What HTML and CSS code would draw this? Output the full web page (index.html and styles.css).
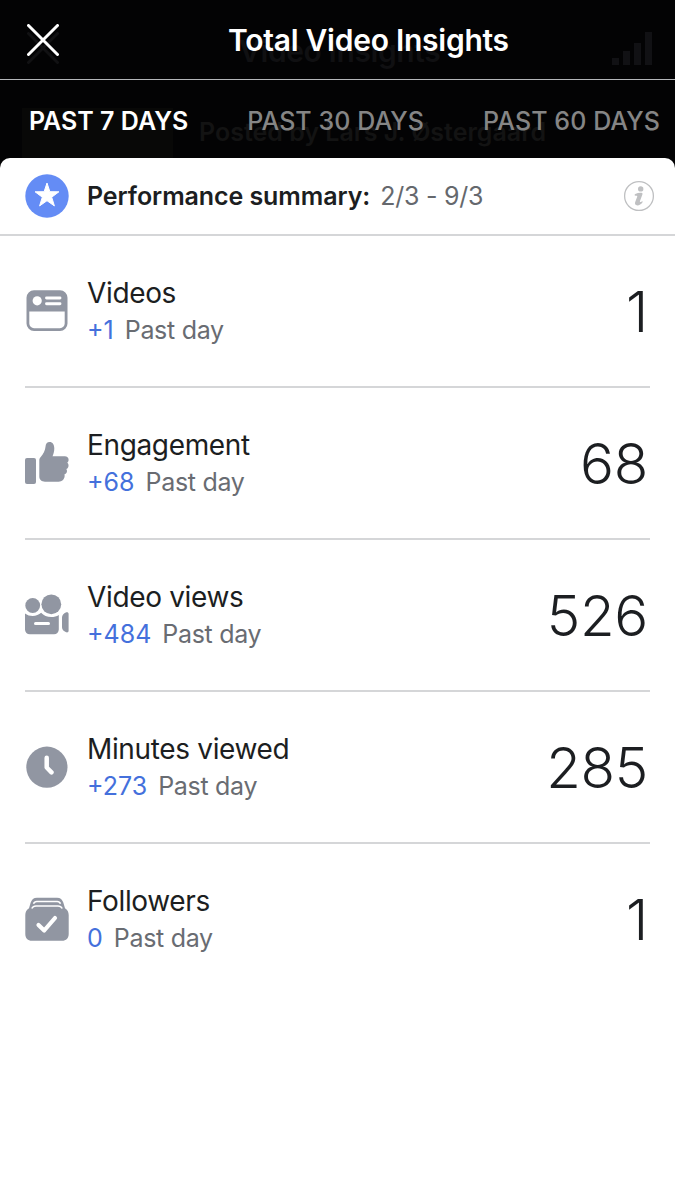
FILE: index.html
```
<!DOCTYPE html>
<html lang="en">
<head>
<meta charset="utf-8">
<title>Total Video Insights</title>
<link rel="stylesheet" href="styles.css">
</head>
<body>
<div class="screen">
  <div class="underlay" aria-hidden="true">
    <svg class="ghost-close" viewBox="0 0 32 32"><path d="M1.5 1.5L30.5 30.5M30.5 1.5L1.5 30.5"/></svg>
    <div class="ghost-title">Video Insights</div>
    <svg class="ghost-bars" viewBox="0 0 40 33"><path d="M0 26h7v7H0zM11 19h7v14h-7zM22 11h7v22h-7zM33 0h7v33h-7z"/></svg>
    <div class="ghost-thumb"></div>
    <div class="ghost-post">Posted by Lars J. Østergaard</div>
  </div>
  <header class="topbar">
    <svg class="close" viewBox="0 0 32 32"><path d="M1.5 1.5L30.5 30.5M30.5 1.5L1.5 30.5"/></svg>
    <h1 class="title">Total Video Insights</h1>
  </header>
  <nav class="tabs">
    <span class="tab active">PAST 7 DAYS</span>
    <span class="tab">PAST 30 DAYS</span>
    <span class="tab">PAST 60 DAYS</span>
  </nav>
  <main class="card">
    <div class="summary">
      <svg class="icon" viewBox="0 0 44 44"><circle cx="22" cy="22" r="21.7" fill="#648cf5"/><path fill="#fff" stroke="#fff" stroke-width="1" stroke-linejoin="round" d="M22 9l2.900 8.700 9 .1-7.200 5.400 2.700 8.700L22 26.700l-7.400 5.200 2.700-8.700-7.200-5.400 9-.1z"/></svg>
      <span class="summary-label">Performance summary:</span>
      <span class="summary-range">2/3 - 9/3</span>
      <svg class="info" viewBox="0 0 32 32"><circle cx="16" cy="16" r="14.400" fill="none" stroke="#bfc0c2" stroke-width="1.300"/><circle cx="17.700" cy="8.900" r="2.700" fill="#bfc0c2"/><path fill="#bfc0c2" d="M12.300 14c2-1 4.200-1.400 6.200-1.200.9.100 1.200.8.900 1.700l-2.500 6.800c-.2.700.3.900 1 .6l.9-.5c.8-.3 1.100.5.600 1.100-1.300 1.700-3 2.900-5 2.900-2 0-2.900-1.300-2.200-3.300l2-5.300c.2-.7-.1-1-.7-1h-1c-1.100 0-1.200-1.300-.2-1.800z"/></svg>
    </div>
    <section class="metrics">
      <div class="metric">
        <svg class="icon" viewBox="0 0 44 44"><path fill="#9196a2" fill-rule="evenodd" d="M9 1.300h26a7.500 7.500 0 0 1 7.500 7.500v25.700A7.500 7.500 0 0 1 35 42H9a7.500 7.500 0 0 1-7.500-7.500V8.800A7.500 7.500 0 0 1 9 1.300zM4.300 22.500v12A4.700 4.700 0 0 0 9 39.200h26a4.700 4.700 0 0 0 4.700-4.700v-12z"/><circle cx="12.200" cy="11.800" r="4.600" fill="#fff"/><path stroke="#fff" stroke-width="2.900" stroke-linecap="round" d="M21.500 9h13.500M21.500 14.700h13.500"/></svg>
        <div class="text"><div class="name">Videos</div><div class="change"><b>+1</b> <span>Past day</span></div></div>
        <div class="value">1</div>
      </div>
      <div class="metric">
        <svg class="icon" viewBox="0 0 44 44"><rect x="0" y="17" width="11" height="26" rx="2" fill="#9196a2"/><path fill="#9196a2" d="M14.300 19.500c0-1.500.5-2.300 1.400-3.400 2.500-3.200 4.500-6.500 4.800-10.300C20.700 3 22 1 24.600 1c3 0 4.700 2.700 4.700 6.200 0 3.200-.7 5.500-1.800 8.100h12.200c2.400 0 3.900 1.500 3.900 3.500 0 1.300-.6 2.400-1.400 3 .9.700 1.500 1.700 1.300 3.100-.1 1.500-1.100 2.700-2.300 3.200.7.700.9 1.600.7 2.700-.3 1.400-1.300 2.300-2.500 2.700.4.800.4 1.800 0 2.900C38.300 39.300 36.400 40.800 32 40.800H20c-3.300 0-5.700-2-5.700-5.200z"/></svg>
        <div class="text"><div class="name">Engagement</div><div class="change"><b>+68</b> <span>Past day</span></div></div>
        <div class="value">68</div>
      </div>
      <div class="metric">
        <svg class="icon" viewBox="0 0 44 44"><g fill="#9196a2"><circle cx="7.700" cy="12.500" r="7.400"/><circle cx="26.300" cy="11.300" r="9.900"/><path d="M0 20.500c2.200 1.700 4.900 2.500 7.700 2.500 3.400 0 6.300-1.200 8.400-3.200 2.500 2.700 6 4.300 10.200 4.300 2.800 0 5.400-.8 7.500-2.200v14.600a4.800 4.800 0 0 1-4.800 4.800H4.800A4.800 4.800 0 0 1 0 36.500z"/><path d="M37 24.500c0-2 1.500-4 4.200-5.200 1.200-.5 2.400.2 2.400 1.500v17c0 1.300-1.200 2-2.400 1.500C38.500 38.200 37 36.200 37 34.200z"/></g><path stroke="#fff" stroke-width="3" stroke-linecap="round" d="M10.500 30.400h13"/></svg>
        <div class="text"><div class="name">Video views</div><div class="change"><b>+484</b> <span>Past day</span></div></div>
        <div class="value">526</div>
      </div>
      <div class="metric">
        <svg class="icon" viewBox="0 0 44 44"><circle cx="21.900" cy="22.200" r="20.600" fill="#9196a2"/><path fill="none" stroke="#fff" stroke-width="4.500" stroke-linecap="round" stroke-linejoin="round" d="M21.700 12.800v9.700l4.800 4.800"/></svg>
        <div class="text"><div class="name">Minutes viewed</div><div class="change"><b>+273</b> <span>Past day</span></div></div>
        <div class="value">285</div>
      </div>
      <div class="metric">
        <svg class="icon" viewBox="0 0 44 44"><path fill="#9196a2" d="M12 .7h20c3.500 0 5.300 2 6.300 4.900L40 11.200c2.400 1.500 3.700 3.800 3.700 6.800v19c0 4.200-2.500 6.800-6.700 6.800H7C2.800 43.800.3 41.200.3 37V18c0-3 1.300-5.300 3.700-6.800l1.700-5.600C6.700 2.700 8.500.7 12 .7z"/><path fill="none" stroke="#fff" stroke-width="1.500" d="M8.500 6.700c.6-1.600 1.600-2.300 3.300-2.300h20.400c1.700 0 2.700.7 3.300 2.300M6.800 11.500c.7-1.500 2-2.600 4.200-2.600h22c2.200 0 3.500 1.100 4.200 2.600"/><path fill="none" stroke="#fff" stroke-width="4.200" stroke-linecap="round" stroke-linejoin="round" d="M13.500 28l5.700 5.500L30 21"/></svg>
        <div class="text"><div class="name">Followers</div><div class="change"><b>0</b> <span>Past day</span></div></div>
        <div class="value">1</div>
      </div>
    </section>
  </main>
</div>
</body>
</html>
```
FILE: styles.css
```
* { box-sizing: border-box; }
body { margin: 0; background: #fff; font-family: Inter, "Liberation Sans", sans-serif; color: #1c1e21; }
.screen { position: relative; display: flex; flex-direction: column; height: 1200px; background: #030304; overflow: hidden; white-space: nowrap; isolation: isolate; }
.underlay { position: absolute; inset: 0; z-index: -1; font-weight: 600; }
.ghost-close { position: absolute; left: 27px; top: 32px; width: 32px; height: 32px; stroke: #111113; stroke-width: 3; stroke-linecap: round; }
.ghost-title { position: absolute; left: 239px; top: 33px; font-size: 30px; line-height: 36px; letter-spacing: -0.4px; color: #101012; }
.ghost-bars { position: absolute; left: 612px; top: 32px; width: 40px; height: 33px; fill: #111114; }
.ghost-thumb { position: absolute; left: 22px; top: 108px; width: 151px; height: 60px; background: #080807; }
.ghost-post { position: absolute; left: 199px; top: 116px; font-size: 25px; line-height: 32px; color: #131313; }
.topbar { display: flex; align-items: center; height: 80px; padding-left: 27px; border-bottom: 1px solid #b4b6b9; flex: none; }
.close { width: 32px; height: 32px; stroke: #fff; stroke-width: 3; stroke-linecap: round; }
.title { margin: 0 0 0 169px; font-size: 30px; line-height: 36px; font-weight: 600; letter-spacing: -0.26px; color: #fff; }
.tabs { display: flex; justify-content: space-between; align-items: center; height: 78px; padding: 4px 15px 0 29px; flex: none; }
.tab { font-size: 25px; line-height: 32px; font-weight: 500; color: #858585; letter-spacing: 0.08px; }
.active { color: #fff; font-weight: 600; letter-spacing: 0; }
.card { flex: 1; background: #fff; border-radius: 10px 10px 0 0; }
.summary { display: flex; align-items: center; height: 78px; padding: 0 20px 0 25px; border-bottom: 2px solid #d5d6d8; }
.icon { width: 44px; height: 44px; flex: none; }
.summary-label { margin-left: 18px; font-size: 25px; line-height: 32px; font-weight: 600; letter-spacing: -0.08px; }
.summary-range { margin-left: 10px; font-size: 25px; line-height: 32px; letter-spacing: -0.25px; color: #65686d; }
.info { width: 32px; height: 32px; margin-left: auto; }
.metrics { padding: 0 25px; }
.metric { display: flex; align-items: center; height: 152px; border-bottom: 2px solid #d5d6d8; }
.metric:last-child { border-bottom-color: transparent; }
.text { margin-left: 18px; padding-top: 1px; flex: 1; }
.name { font-size: 28px; line-height: 38px; letter-spacing: -0.35px; }
.change { display: flex; gap: 11px; font-size: 25px; line-height: 37px; color: #696c72; letter-spacing: -0.3px; }
.change b { font-weight: 400; color: #4470dc; letter-spacing: 0; }
.value { padding-top: 1px; font-size: 56.500px; line-height: 64px; font-weight: 300; letter-spacing: -0.3px; margin-right: 2px; }
```
